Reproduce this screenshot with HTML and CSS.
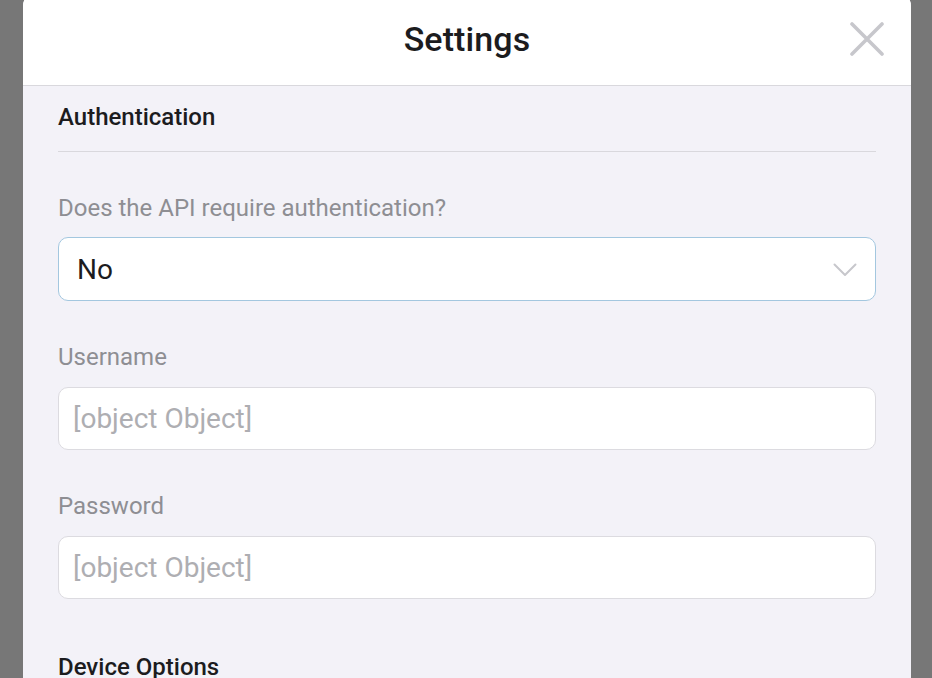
FILE: index.html
```html
<!DOCTYPE html>
<html>
<head>
<meta charset="utf-8">
<link rel="stylesheet" href="styles.css">
</head>
<body>
<div class="modal">
  <header class="modal-header">
    <span></span>
    <h1 class="title">Settings</h1>
    <button class="close" aria-label="Close">
      <svg width="34" height="34" viewBox="0 0 34 34"><path d="M2 2 L32 32 M32 2 L2 32" stroke="#c7c7cc" stroke-width="3.6" stroke-linecap="round" fill="none"/></svg>
    </button>
  </header>
  <div class="modal-body">
    <h2 class="section-title divided">Authentication</h2>
    <div class="field first">
      <div class="label">Does the API require authentication?</div>
      <div class="select">
        <span class="select-value">No</span>
        <svg class="chevron" width="24" height="14" viewBox="0 0 24 14"><path d="M1.5 1.5 L12 12 L22.5 1.5" stroke="#c7c7cc" stroke-width="2" fill="none" stroke-linecap="round" stroke-linejoin="round"/></svg>
      </div>
    </div>
    <div class="field">
      <div class="label">Username</div>
      <div class="input"><span class="placeholder">[object Object]</span></div>
    </div>
    <div class="field">
      <div class="label">Password</div>
      <div class="input"><span class="placeholder">[object Object]</span></div>
    </div>
    <h2 class="section-title next">Device Options</h2>
  </div>
</div>
</body>
</html>
```

FILE: styles.css
```css
* { box-sizing: border-box; }
html, body {
  margin: 0;
  padding: 0;
  height: 100%;
  overflow: hidden;
}
body {
  background: #777777;
  font-family: Roboto, "Noto Sans", sans-serif;
  color: #1c1c1e;
}
.modal {
  margin: -8px 21px 0 23px;
  height: 720px;
  background: #f3f2f8;
  border-radius: 14px;
  overflow: hidden;
}
.modal-header {
  height: 94px;
  background: #ffffff;
  border-bottom: 1px solid #d9d8dd;
  display: grid;
  grid-template-columns: 1fr auto 1fr;
  align-items: center;
  padding: 0 27px 0 27px;
}
.title {
  margin: 0;
  font-size: 34px;
  font-weight: 500;
  line-height: 40px;
  letter-spacing: 0.1px;
}
.close {
  justify-self: end;
  background: none;
  border: 0;
  padding: 0;
  width: 34px;
  height: 34px;
  display: flex;
}
.modal-body {
  padding: 16px 35px 0 35px;
}
.section-title {
  margin: 0;
  font-size: 24px;
  font-weight: 500;
  line-height: 30px;
  color: #1c1c1e;
}
.divided {
  padding-bottom: 19px;
  border-bottom: 1px solid #d9d8dd;
}
.field {
  margin-top: 43px;
}
.label {
  font-size: 24px;
  line-height: 26px;
  color: #8e8e93;
  margin-bottom: 16px;
}
.field + .field .label {
  margin-bottom: 17px;
}
.select {
  height: 64px;
  background: #ffffff;
  border: 1px solid #a3c7df;
  border-radius: 10px;
  display: flex;
  align-items: center;
  justify-content: space-between;
  padding: 0 18px 0 18px;
}
.select-value {
  font-size: 28px;
  color: #1c1c1e;
}
.chevron {
  margin-top: 2px;
}
.input {
  height: 63px;
  background: #ffffff;
  border: 1px solid #dcdbe0;
  border-radius: 10px;
  display: flex;
  align-items: center;
  padding: 0 14px;
}
.placeholder {
  font-size: 28px;
  color: #aeaeb2;
}
.next {
  margin-top: 53px;
}
```
